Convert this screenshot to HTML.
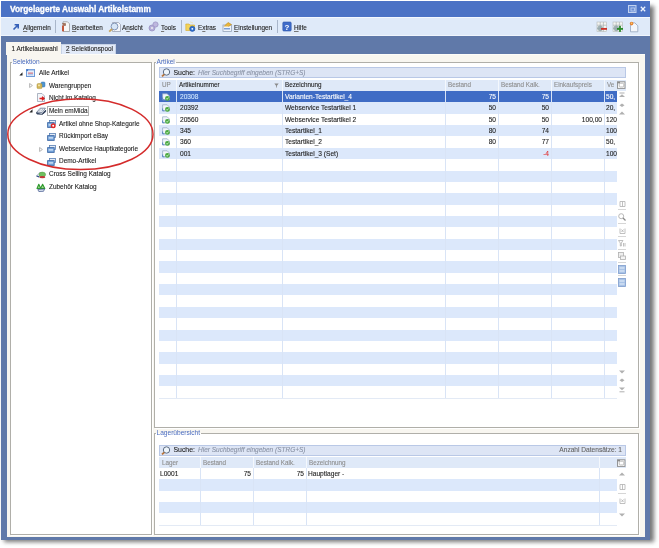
<!DOCTYPE html>
<html><head><meta charset="utf-8">
<style>
*{margin:0;padding:0;box-sizing:border-box}
html,body{width:659px;height:548px;overflow:hidden;background:#fff;font-family:"Liberation Sans",sans-serif}
.a{position:absolute}
svg.a{overflow:visible}
.t{position:absolute;white-space:nowrap;font-size:6.6px;line-height:8px;color:#222;-webkit-text-stroke:.1px currentColor}
.lbl{position:absolute;white-space:nowrap;font-size:6.6px;line-height:8px;color:#4a6cc0;padding:0 1px}
.g{position:absolute;white-space:nowrap;font-size:6.6px;line-height:11px;color:#222;-webkit-text-stroke:.1px currentColor}
.r{text-align:right}
u{text-decoration-color:#777;text-decoration-thickness:.6px}
</style></head><body><div style="position:absolute;left:0;top:0;width:659px;height:548px;filter:blur(0.35px)">

<div class="a" style="left:4px;top:5.5px;width:650px;height:536px;background:#555;filter:blur(2.2px);opacity:.8"></div>
<div class="a" style="left:1px;top:1px;width:649px;height:539px;background:#6079a9"></div>
<div class="a" style="left:1px;top:1px;width:649px;height:16px;background:#4b72c5"></div>
<div class="t" style="left:10px;top:4px;font-size:8.3px;line-height:10px;font-weight:bold;color:#fff;-webkit-text-stroke:.3px #fff">Vorgelagerte Auswahl Artikelstamm</div>
<svg class="a" style="left:628px;top:5px;" width="9" height="8" viewBox="0 0 9 8"><rect x="0.5" y="0.5" width="7.5" height="7" fill="#6b8fd6" stroke="#c2d2f0" stroke-width="1"/><rect x="3" y="3" width="3.5" height="3" fill="none" stroke="#c2d2f0" stroke-width=".8"/></svg>
<svg class="a" style="left:640.3px;top:5.5px;" width="6" height="6" viewBox="0 0 6 6"><path d="M.8 .8L5.2 5.2M5.2 .8L.8 5.2" stroke="#eef3fc" stroke-width="1.3"/></svg>
<div class="a" style="left:1px;top:17px;width:649px;height:19px;background:#dfeaf9;border-top:1px solid #f4f8fe;border-bottom:1px solid #f0f5fc"></div>
<div class="a" style="left:7px;top:54px;width:638px;height:483px;background:#f8f6f0;border-top:1px solid #fdfcf8"></div>
<div class="a" style="left:6px;top:42px;width:55px;height:13px;background:#f8f6f0"></div>
<div class="t" style="left:11.5px;top:45px;font-size:6.4px">1 Artikelauswahl</div>
<div class="a" style="left:61px;top:43.5px;width:55px;height:10.5px;background:#e2eaf8;border:1px solid #c6d2e6;border-bottom:none"></div>
<div class="t" style="left:66px;top:45px;font-size:6.4px"><u>2</u> Selektionspool</div>
<div class="t" style="left:23px;top:23.8px;font-size:6.35px"><u>A</u>llgemein</div>
<div class="a" style="left:55px;top:20px;width:1px;height:13px;background:#a9b6ca"></div>
<div class="t" style="left:72px;top:23.8px;font-size:6.35px"><u>B</u>earbeiten</div>
<div class="t" style="left:122px;top:23.8px;font-size:6.35px">A<u>n</u>sicht</div>
<div class="t" style="left:161px;top:23.8px;font-size:6.35px"><u>T</u>ools</div>
<div class="a" style="left:181px;top:20px;width:1px;height:13px;background:#a9b6ca"></div>
<div class="t" style="left:198px;top:23.8px;font-size:6.35px">E<u>x</u>tras</div>
<div class="t" style="left:234px;top:23.8px;font-size:6.35px"><u>E</u>instellungen</div>
<div class="a" style="left:277px;top:20px;width:1px;height:13px;background:#a9b6ca"></div>
<div class="t" style="left:294px;top:23.8px;font-size:6.35px"><u>H</u>ilfe</div>
<div class="a" style="left:10px;top:62px;width:142px;height:473px;border:1px solid #b0afa9;box-shadow:1px 1px 0 #fff, inset 1px 1px 0 #fff;background:#fff"></div>
<div class="a" style="left:12px;top:59px;width:28px;height:5px;background:linear-gradient(#f8f6f0 0 3px,#fff 3px)"></div>
<div class="lbl" style="left:11.5px;top:58px;">Selektion</div>
<div class="a" style="left:154px;top:62px;width:485px;height:366px;border:1px solid #b0afa9;box-shadow:1px 1px 0 #fff, inset 1px 1px 0 #fff;background:#fff"></div>
<div class="a" style="left:156px;top:59px;width:20px;height:5px;background:linear-gradient(#f8f6f0 0 3px,#fff 3px)"></div>
<div class="lbl" style="left:155.5px;top:58px;">Artikel</div>
<div class="a" style="left:154px;top:433px;width:485px;height:102px;border:1px solid #b0afa9;box-shadow:1px 1px 0 #fff, inset 1px 1px 0 #fff;background:#fff"></div>
<div class="a" style="left:156px;top:430px;width:45px;height:5px;background:linear-gradient(#f8f6f0 0 3px,#fff 3px)"></div>
<div class="lbl" style="left:155.5px;top:429px;">Lagerübersicht</div>
<div class="t" style="left:39px;top:69.2px;font-size:6.45px">Alle Artikel</div>
<div class="t" style="left:49px;top:81.8px;font-size:6.45px">Warengruppen</div>
<div class="t" style="left:49px;top:94.4px;font-size:6.45px">Nicht im Katalog</div>
<div class="t" style="left:49px;top:107.0px;font-size:6.45px">Mein emMida</div>
<div class="t" style="left:59px;top:119.6px;font-size:6.45px">Artikel ohne Shop-Kategorie</div>
<div class="t" style="left:59px;top:132.2px;font-size:6.45px">Rückimport eBay</div>
<div class="t" style="left:59px;top:144.8px;font-size:6.45px">Webservice Hauptkategorie</div>
<div class="t" style="left:59px;top:157.4px;font-size:6.45px">Demo-Artikel</div>
<div class="t" style="left:49px;top:170.0px;font-size:6.45px">Cross Selling Katalog</div>
<div class="t" style="left:49px;top:182.6px;font-size:6.45px">Zubehör Katalog</div>
<div class="a" style="left:159px;top:67px;width:467px;height:11px;background:#dde5f5;border:1px solid #b9c8e6"></div>
<div class="t" style="left:173.5px;top:68.5px;font-size:6.9px;color:#1e1e1e">Suche:</div>
<div class="t" style="left:198px;top:68.5px;font-style:italic;color:#8a93a6;font-size:6.5px">Hier Suchbegriff eingeben (STRG+S)</div>
<div class="a" style="left:159px;top:80px;width:467px;height:10.5px;background:#dfe9f8"></div>
<div class="a" style="left:159px;top:91.0px;width:458px;height:11.36px;background:#3f6cc5"></div>
<div class="a" style="left:159px;top:102.36px;width:458px;height:11.36px;background:#dce8fb"></div>
<div class="a" style="left:159px;top:125.08px;width:458px;height:11.36px;background:#dce8fb"></div>
<div class="a" style="left:159px;top:147.8px;width:458px;height:11.36px;background:#dce8fb"></div>
<div class="a" style="left:159px;top:170.52px;width:458px;height:11.36px;background:#dce8fb"></div>
<div class="a" style="left:159px;top:193.24px;width:458px;height:11.36px;background:#dce8fb"></div>
<div class="a" style="left:159px;top:215.96px;width:458px;height:11.36px;background:#dce8fb"></div>
<div class="a" style="left:159px;top:238.68px;width:458px;height:11.36px;background:#dce8fb"></div>
<div class="a" style="left:159px;top:261.4px;width:458px;height:11.36px;background:#dce8fb"></div>
<div class="a" style="left:159px;top:284.12px;width:458px;height:11.36px;background:#dce8fb"></div>
<div class="a" style="left:159px;top:306.84px;width:458px;height:11.36px;background:#dce8fb"></div>
<div class="a" style="left:159px;top:329.56px;width:458px;height:11.36px;background:#dce8fb"></div>
<div class="a" style="left:159px;top:352.28px;width:458px;height:11.36px;background:#dce8fb"></div>
<div class="a" style="left:159px;top:375.0px;width:458px;height:11.36px;background:#dce8fb"></div>
<div class="a" style="left:176px;top:91px;width:1px;height:306.72px;background:#d9e4f6"></div>
<div class="a" style="left:176px;top:80px;width:1px;height:11px;background:#f4f8fd"></div>
<div class="a" style="left:282px;top:91px;width:1px;height:306.72px;background:#d9e4f6"></div>
<div class="a" style="left:282px;top:80px;width:1px;height:11px;background:#f4f8fd"></div>
<div class="a" style="left:445px;top:91px;width:1px;height:306.72px;background:#d9e4f6"></div>
<div class="a" style="left:445px;top:80px;width:1px;height:11px;background:#f4f8fd"></div>
<div class="a" style="left:498px;top:91px;width:1px;height:306.72px;background:#d9e4f6"></div>
<div class="a" style="left:498px;top:80px;width:1px;height:11px;background:#f4f8fd"></div>
<div class="a" style="left:551px;top:91px;width:1px;height:306.72px;background:#d9e4f6"></div>
<div class="a" style="left:551px;top:80px;width:1px;height:11px;background:#f4f8fd"></div>
<div class="a" style="left:604px;top:91px;width:1px;height:306.72px;background:#d9e4f6"></div>
<div class="a" style="left:604px;top:80px;width:1px;height:11px;background:#f4f8fd"></div>
<div class="a" style="left:159px;top:397.72px;width:458px;height:1px;background:#e3eaf5"></div>
<div class="g" style="left:162px;top:79px;font-size:6.3px;color:#8d8d8d">UP</div>
<div class="g" style="left:179px;top:79px;font-size:6.3px;color:#222">Artikelnummer</div>
<div class="g" style="left:285px;top:79px;font-size:6.3px;color:#222">Bezeichnung</div>
<div class="g" style="left:448px;top:79px;font-size:6.3px;color:#8d8d8d">Bestand</div>
<div class="g" style="left:501px;top:79px;font-size:6.3px;color:#8d8d8d">Bestand Kalk.</div>
<div class="g" style="left:554px;top:79px;font-size:6.3px;color:#8d8d8d">Einkaufspreis</div>
<div class="g" style="left:607px;top:79px;font-size:6.3px;color:#8d8d8d">Ve</div>
<div class="g" style="left:180px;top:91.0px;color:#cfe6ff">20308</div>
<div class="g" style="left:285px;top:91.0px;color:#fff">Varianten-Testartikel_4</div>
<div class="g r" style="left:447px;top:91.0px;color:#fff;width:49px">75</div>
<div class="g r" style="left:500px;top:91.0px;color:#fff;width:49px">75</div>
<div class="g r" style="left:553px;top:91.0px;color:#fff;width:49px"></div>
<div class="g" style="left:606px;top:91.0px;color:#fff">50,</div>
<div class="g" style="left:180px;top:102.36px;color:#222">20392</div>
<div class="g" style="left:285px;top:102.36px;color:#222">Webservice Testartikel 1</div>
<div class="g r" style="left:447px;top:102.36px;color:#222;width:49px">50</div>
<div class="g r" style="left:500px;top:102.36px;color:#222;width:49px">50</div>
<div class="g r" style="left:553px;top:102.36px;color:#222;width:49px"></div>
<div class="g" style="left:606px;top:102.36px;color:#222">20,</div>
<div class="g" style="left:180px;top:113.72px;color:#222">20560</div>
<div class="g" style="left:285px;top:113.72px;color:#222">Webservice Testartikel 2</div>
<div class="g r" style="left:447px;top:113.72px;color:#222;width:49px">50</div>
<div class="g r" style="left:500px;top:113.72px;color:#222;width:49px">50</div>
<div class="g r" style="left:553px;top:113.72px;color:#222;width:49px">100,00</div>
<div class="g" style="left:606px;top:113.72px;color:#222">120</div>
<div class="g" style="left:180px;top:125.08px;color:#222">345</div>
<div class="g" style="left:285px;top:125.08px;color:#222">Testartikel_1</div>
<div class="g r" style="left:447px;top:125.08px;color:#222;width:49px">80</div>
<div class="g r" style="left:500px;top:125.08px;color:#222;width:49px">74</div>
<div class="g r" style="left:553px;top:125.08px;color:#222;width:49px"></div>
<div class="g" style="left:606px;top:125.08px;color:#222">100</div>
<div class="g" style="left:180px;top:136.44px;color:#222">360</div>
<div class="g" style="left:285px;top:136.44px;color:#222">Testartikel_2</div>
<div class="g r" style="left:447px;top:136.44px;color:#222;width:49px">80</div>
<div class="g r" style="left:500px;top:136.44px;color:#222;width:49px">77</div>
<div class="g r" style="left:553px;top:136.44px;color:#222;width:49px"></div>
<div class="g" style="left:606px;top:136.44px;color:#222">50,</div>
<div class="g" style="left:180px;top:147.8px;color:#222">001</div>
<div class="g" style="left:285px;top:147.8px;color:#222">Testartikel_3 (Set)</div>
<div class="g r" style="left:447px;top:147.8px;color:#222;width:49px"></div>
<div class="g r" style="left:500px;top:147.8px;color:#e03030;width:49px">-4</div>
<div class="g r" style="left:553px;top:147.8px;color:#222;width:49px"></div>
<div class="g" style="left:606px;top:147.8px;color:#222">100</div>
<div class="a" style="left:159px;top:445px;width:467px;height:10.5px;background:#dde5f5;border:1px solid #b9c8e6"></div>
<div class="t" style="left:173.5px;top:446px;font-size:6.9px;color:#1e1e1e">Suche:</div>
<div class="t" style="left:198px;top:446px;font-style:italic;color:#8a93a6;font-size:6.5px">Hier Suchbegriff eingeben (STRG+S)</div>
<div class="g r" style="left:540px;top:444.3px;color:#666;width:82px">Anzahl Datensätze: 1</div>
<div class="a" style="left:159px;top:457px;width:467px;height:11px;background:#dfe9f8"></div>
<div class="a" style="left:159px;top:479.36px;width:458px;height:11.36px;background:#dce8fb"></div>
<div class="a" style="left:159px;top:502.08px;width:458px;height:11.36px;background:#dce8fb"></div>
<div class="a" style="left:200px;top:468px;width:1px;height:56.8px;background:#d9e4f6"></div>
<div class="a" style="left:200px;top:457px;width:1px;height:11px;background:#f4f8fd"></div>
<div class="a" style="left:253px;top:468px;width:1px;height:56.8px;background:#d9e4f6"></div>
<div class="a" style="left:253px;top:457px;width:1px;height:11px;background:#f4f8fd"></div>
<div class="a" style="left:306px;top:468px;width:1px;height:56.8px;background:#d9e4f6"></div>
<div class="a" style="left:306px;top:457px;width:1px;height:11px;background:#f4f8fd"></div>
<div class="a" style="left:599px;top:468px;width:1px;height:56.8px;background:#d9e4f6"></div>
<div class="a" style="left:599px;top:457px;width:1px;height:11px;background:#f4f8fd"></div>
<div class="a" style="left:159px;top:524.8px;width:458px;height:1px;background:#e3eaf5"></div>
<div class="g" style="left:162px;top:457px;font-size:6.3px;color:#8d8d8d">Lager</div>
<div class="g" style="left:203px;top:457px;font-size:6.3px;color:#8d8d8d">Bestand</div>
<div class="g" style="left:256px;top:457px;font-size:6.3px;color:#8d8d8d">Bestand Kalk.</div>
<div class="g" style="left:309px;top:457px;font-size:6.3px;color:#8d8d8d">Bezeichnung</div>
<div class="g" style="left:602px;top:457px;font-size:6.3px;color:#8d8d8d"></div>
<div class="g" style="left:160px;top:468px;">L0001</div>
<div class="g r" style="left:202px;top:468px;width:49px">75</div>
<div class="g r" style="left:255px;top:468px;width:49px">75</div>
<div class="g" style="left:308px;top:468px;">Hauptlager -</div>
<svg class="a" style="left:12px;top:23px;" width="8" height="8" viewBox="0 0 8 8"><path d="M1.5 6.5L6 2M2.6 1.8H6.2V5.4" fill="none" stroke="#3560b8" stroke-width="1.6"/></svg>
<svg class="a" style="left:61px;top:21px;" width="9" height="11" viewBox="0 0 9 11"><path d="M2 .8H6.5L8.5 2.8V10.5H2Z" fill="#f7f7f7" stroke="#9a9a9a" stroke-width=".8"/><path d="M2 4.5V10.3" stroke="#c24a2a" stroke-width="1.8"/><path d="M1.2 2.5H4.5V4.5H2.5" fill="#a9735a" stroke="#7b4a35" stroke-width=".5"/></svg>
<svg class="a" style="left:108px;top:21px;" width="14" height="11" viewBox="0 0 14 11"><path d="M4.5 1.5H10.5L12.5 3.5V10.5H4.5Z" fill="#f4f6fa" stroke="#9aa2b3" stroke-width=".8"/><circle cx="6.5" cy="5.5" r="3.4" fill="#d7e6f7" stroke="#8396b8" stroke-width="1"/><path d="M4 8L1.2 10.6" stroke="#c9a45a" stroke-width="1.8"/></svg>
<svg class="a" style="left:148px;top:21px;" width="11" height="11" viewBox="0 0 11 11"><circle cx="4" cy="7" r="3" fill="#b4aed8" stroke="#9a94c4" stroke-width=".8"/><circle cx="7.5" cy="3.5" r="2.6" fill="#bdb7de" stroke="#9a94c4" stroke-width=".8"/><circle cx="4" cy="7" r="1" fill="#eee"/></svg>
<svg class="a" style="left:185px;top:21px;" width="11" height="11" viewBox="0 0 11 11"><path d="M.8 3H4L5 4H9.5V9.5H.8Z" fill="#f2d35a" stroke="#d6a928" stroke-width=".6"/><path d="M5 .8L8 2" stroke="#e9e2c0" stroke-width="1"/><circle cx="7.3" cy="7.8" r="2.6" fill="#2f6fd0" stroke="#1d4fa6" stroke-width=".6"/><circle cx="7.3" cy="7.8" r=".9" fill="#fff"/></svg>
<svg class="a" style="left:222px;top:21px;" width="11" height="11" viewBox="0 0 11 11"><rect x="1" y="4" width="8.5" height="6.5" fill="#f0f4fa" stroke="#95a3b9" stroke-width=".8"/><path d="M2 5.5L6 1.5L9.5 3.5L6.5 5.5" fill="#e9b53a" stroke="#b9861b" stroke-width=".6"/><rect x="2" y="7" width="6" height="1.5" fill="#7aa0d8"/></svg>
<svg class="a" style="left:282px;top:21px;" width="10" height="11" viewBox="0 0 10 11"><rect x=".8" y="1" width="8.4" height="9" rx="1" fill="#3e6bc9" stroke="#2d55a8" stroke-width=".6"/><text x="5" y="8.6" font-family="Liberation Sans" font-weight="bold" font-size="8" fill="#fff" text-anchor="middle">?</text></svg>
<svg class="a" style="left:595.5px;top:21px;" width="12" height="12" viewBox="0 0 12 12"><rect x="1" y="1" width="9.5" height="9.5" fill="#f4f5f2" stroke="#b5bab8" stroke-width=".6"/><path d="M4.2 1V10.5M7.4 1V10.5M1 4.2H10.5M1 7.4H10.5" stroke="#aab2b0" stroke-width=".7"/><circle cx="4.2" cy="7.2" r="2.8" fill="#8fa3a6" opacity=".8"/><rect x="5" y="7" width="6" height="1.8" fill="#cc3026"/></svg>
<svg class="a" style="left:612px;top:21px;" width="12" height="12" viewBox="0 0 12 12"><rect x="1" y="1" width="9.5" height="9.5" fill="#f4f5f2" stroke="#b5bab8" stroke-width=".6"/><path d="M4.2 1V10.5M7.4 1V10.5M1 4.2H10.5M1 7.4H10.5" stroke="#aab2b0" stroke-width=".7"/><circle cx="4.2" cy="7.2" r="2.8" fill="#8fa3a6" opacity=".8"/><rect x="5" y="7" width="6" height="1.8" fill="#2a8a2a"/><rect x="7.1" y="4.9" width="1.8" height="6" fill="#2a8a2a"/></svg>
<svg class="a" style="left:629px;top:21px;" width="10" height="12" viewBox="0 0 10 12"><path d="M1.5 1.8H5.8L8.8 4.8V10.8H1.5Z" fill="#f3f6fb" stroke="#95a5bd" stroke-width=".8"/><circle cx="2.6" cy="2.6" r="1.8" fill="#e9822c"/><circle cx="2.6" cy="2.3" r=".7" fill="#f8d27a"/></svg>
<svg class="a" style="left:19px;top:71.5px;" width="4" height="4" viewBox="0 0 4 4"><path d="M3.5 .3V3.5H.3Z" fill="#222"/></svg>
<svg class="a" style="left:26px;top:69.3px;" width="9" height="8" viewBox="0 0 9 8"><rect x=".5" y=".5" width="8" height="7" fill="#e6eefa" stroke="#6f9ad8" stroke-width="1"/><rect x=".3" y=".3" width="2" height="1.8" fill="#3f74c8"/><rect x="2.5" y=".8" width="5.5" height="1" fill="#a9c4ea"/><rect x="2" y="3.6" width="5" height="1" fill="#c85a6a"/><rect x="2" y="5.4" width="5" height=".8" fill="#8fb0e0"/></svg>
<svg class="a" style="left:29px;top:83.3px;" width="4" height="5" viewBox="0 0 4 5"><path d="M.6 .5L3.4 2.5L.6 4.5Z" fill="none" stroke="#9a9a9a" stroke-width=".7"/></svg>
<svg class="a" style="left:36px;top:81px;" width="10" height="9" viewBox="0 0 10 9"><rect x="5" y="1" width="4" height="5" rx="1" fill="#4f95d0" stroke="#3a76b0" stroke-width=".5"/><rect x="1" y="2.6" width="5" height="5" rx="1.2" fill="#d2b75a" stroke="#a88f3a" stroke-width=".5"/><rect x="2" y="3.6" width="2" height="1.6" fill="#f2e3a8"/></svg>
<svg class="a" style="left:37px;top:93px;" width="8" height="9" viewBox="0 0 8 9"><path d="M.5 .5H5L7.5 3V8.5H.5Z" fill="#f4f6fa" stroke="#8c96aa" stroke-width=".7"/><path d="M2.5 5.5H6.5M5 3.8L7 5.5L5 7.2" stroke="#d81e1e" stroke-width="1.4" fill="none"/></svg>
<svg class="a" style="left:29px;top:109px;" width="4" height="4" viewBox="0 0 4 4"><path d="M3.5 .3V3.5H.3Z" fill="#222"/></svg>
<svg class="a" style="left:36px;top:107px;" width="10" height="8" viewBox="0 0 10 8"><path d="M.8 5.2L4.2 1.2H9.4L6.2 5.6Z" fill="#eef2f6" stroke="#51627e" stroke-width=".7"/><path d="M4.5 2.5L3 4.6M6.8 2L5.2 4.4" stroke="#8593a8" stroke-width=".6"/><path d="M.6 5.3L.9 6.9L6.2 7.2L9.6 3.2V4.8L6.2 7.4" fill="#3f4f6c" stroke="#34435e" stroke-width="1"/></svg>
<div class="a" style="left:47.3px;top:106px;width:41.5px;height:10px;border:1px solid #b0b0b0"></div>
<svg class="a" style="left:47px;top:120px;" width="9" height="8" viewBox="0 0 9 8"><rect x="2.5" y=".5" width="6" height="4" fill="#e4ecf6" stroke="#587fb5" stroke-width=".8"/><rect x=".6" y="2.6" width="6.6" height="4.9" fill="#6f9ed6" stroke="#3d68a5" stroke-width=".8"/><rect x="1.6" y="4.2" width="4.6" height="1.4" fill="#cfe1f6"/><circle cx="6.2" cy="5.8" r="2.5" fill="#e02828"/><circle cx="6.2" cy="5.8" r="1" fill="#fff"/></svg>
<svg class="a" style="left:47px;top:132.5px;" width="9" height="8" viewBox="0 0 9 8"><rect x="2.5" y=".5" width="6" height="4" fill="#e4ecf6" stroke="#587fb5" stroke-width=".8"/><rect x=".6" y="2.6" width="6.6" height="4.9" fill="#6f9ed6" stroke="#3d68a5" stroke-width=".8"/><rect x="1.6" y="4.2" width="4.6" height="1.4" fill="#cfe1f6"/></svg>
<svg class="a" style="left:39px;top:146.8px;" width="4" height="5" viewBox="0 0 4 5"><path d="M.6 .5L3.4 2.5L.6 4.5Z" fill="none" stroke="#9a9a9a" stroke-width=".7"/></svg>
<svg class="a" style="left:47px;top:145px;" width="9" height="8" viewBox="0 0 9 8"><rect x="2.5" y=".5" width="6" height="4" fill="#e4ecf6" stroke="#587fb5" stroke-width=".8"/><rect x=".6" y="2.6" width="6.6" height="4.9" fill="#6f9ed6" stroke="#3d68a5" stroke-width=".8"/><rect x="1.6" y="4.2" width="4.6" height="1.4" fill="#cfe1f6"/></svg>
<svg class="a" style="left:47px;top:157.7px;" width="9" height="8" viewBox="0 0 9 8"><rect x="2.5" y=".5" width="6" height="4" fill="#e4ecf6" stroke="#587fb5" stroke-width=".8"/><rect x=".6" y="2.6" width="6.6" height="4.9" fill="#6f9ed6" stroke="#3d68a5" stroke-width=".8"/><rect x="1.6" y="4.2" width="4.6" height="1.4" fill="#cfe1f6"/></svg>
<svg class="a" style="left:36px;top:169.5px;" width="10" height="9" viewBox="0 0 10 9"><path d="M.5 6L3.5 2.5L6 2.8L3.2 6.8Z" fill="#e8ecf2" stroke="#8a98ae" stroke-width=".5"/><path d="M.5 6L3.2 6.8" stroke="#334d8a" stroke-width="1.2"/><ellipse cx="6.3" cy="4.6" rx="3.3" ry="2.5" fill="#6fbf5e" stroke="#4c9a40" stroke-width=".5"/><ellipse cx="6.3" cy="7.2" rx="3" ry="1.1" fill="#c23838"/></svg>
<svg class="a" style="left:36px;top:182.5px;" width="10" height="9" viewBox="0 0 10 9"><path d="M1 5.5L2.8 1.2L4.6 5.2L6.6 1.2L8.8 5.5Z" fill="#9ed68a" stroke="#2f9a2f" stroke-width="1.1" stroke-linejoin="round"/><path d="M1.8 6.5L8.6 6L7.5 8.3L2.8 8.5Z" fill="#d9e2f0" stroke="#3a4f86" stroke-width=".7"/></svg>
<svg class="a" style="left:160.5px;top:68px;" width="10" height="9" viewBox="0 0 10 9"><circle cx="5.5" cy="4" r="3.2" fill="#eef5fb" stroke="#5c6c82" stroke-width="1"/><path d="M3.3 6.3L1 8.4" stroke="#b8743a" stroke-width="1.8"/></svg>
<svg class="a" style="left:160.5px;top:446px;" width="10" height="9" viewBox="0 0 10 9"><circle cx="5.5" cy="4" r="3.2" fill="#eef5fb" stroke="#5c6c82" stroke-width="1"/><path d="M3.3 6.3L1 8.4" stroke="#b8743a" stroke-width="1.8"/></svg>
<svg class="a" style="left:273.5px;top:83px;" width="5" height="5" viewBox="0 0 5 5"><path d="M.3 .5H4.7L2.9 2.8V4.6H2.1V2.8Z" fill="#8a8a8a"/></svg>
<svg class="a" style="left:617px;top:81px;" width="9" height="8" viewBox="0 0 9 8"><rect x=".5" y=".8" width="7.5" height="6.6" fill="#f6f6f6" stroke="#8c8c8c" stroke-width=".9"/><rect x="2.3" y="2.3" width="4.4" height="3.6" rx="1" fill="#fff" stroke="#9a9a9a" stroke-width=".6"/><rect x=".5" y=".8" width="2.5" height="1.6" fill="#8c8c8c"/></svg>
<svg class="a" style="left:617px;top:458.5px;" width="9" height="8" viewBox="0 0 9 8"><rect x=".5" y=".8" width="7.5" height="6.6" fill="#f6f6f6" stroke="#8c8c8c" stroke-width=".9"/><rect x="2.3" y="2.3" width="4.4" height="3.6" rx="1" fill="#fff" stroke="#9a9a9a" stroke-width=".6"/><rect x=".5" y=".8" width="2.5" height="1.6" fill="#8c8c8c"/></svg>
<svg class="a" style="left:161.5px;top:92.8px;" width="9" height="8" viewBox="0 0 9 8"><path d="M.6 .8H5.2L7.4 3V6.8H.6Z" fill="#f2f6fb" stroke="#8fa3c0" stroke-width=".7"/><path d="M.6 4.5V6.8H2.5" stroke="#5a86c4" stroke-width="1" fill="none"/><circle cx="5.4" cy="5.4" r="2.4" fill="#49a83e"/><path d="M4.2 5.4L5.1 6.3L6.6 4.5" stroke="#eaffea" stroke-width=".8" fill="none"/></svg>
<svg class="a" style="left:161.5px;top:104.16px;" width="9" height="8" viewBox="0 0 9 8"><path d="M.6 .8H5.2L7.4 3V6.8H.6Z" fill="#f2f6fb" stroke="#8fa3c0" stroke-width=".7"/><path d="M.6 4.5V6.8H2.5" stroke="#5a86c4" stroke-width="1" fill="none"/><circle cx="5.4" cy="5.4" r="2.4" fill="#49a83e"/><path d="M4.2 5.4L5.1 6.3L6.6 4.5" stroke="#eaffea" stroke-width=".8" fill="none"/></svg>
<svg class="a" style="left:161.5px;top:115.52px;" width="9" height="8" viewBox="0 0 9 8"><path d="M.6 .8H5.2L7.4 3V6.8H.6Z" fill="#f2f6fb" stroke="#8fa3c0" stroke-width=".7"/><path d="M.6 4.5V6.8H2.5" stroke="#5a86c4" stroke-width="1" fill="none"/><circle cx="5.4" cy="5.4" r="2.4" fill="#49a83e"/><path d="M4.2 5.4L5.1 6.3L6.6 4.5" stroke="#eaffea" stroke-width=".8" fill="none"/></svg>
<svg class="a" style="left:161.5px;top:126.88px;" width="9" height="8" viewBox="0 0 9 8"><path d="M.6 .8H5.2L7.4 3V6.8H.6Z" fill="#f2f6fb" stroke="#8fa3c0" stroke-width=".7"/><path d="M.6 4.5V6.8H2.5" stroke="#5a86c4" stroke-width="1" fill="none"/><circle cx="5.4" cy="5.4" r="2.4" fill="#49a83e"/><path d="M4.2 5.4L5.1 6.3L6.6 4.5" stroke="#eaffea" stroke-width=".8" fill="none"/></svg>
<svg class="a" style="left:161.5px;top:138.24px;" width="9" height="8" viewBox="0 0 9 8"><path d="M.6 .8H5.2L7.4 3V6.8H.6Z" fill="#f2f6fb" stroke="#8fa3c0" stroke-width=".7"/><path d="M.6 4.5V6.8H2.5" stroke="#5a86c4" stroke-width="1" fill="none"/><circle cx="5.4" cy="5.4" r="2.4" fill="#49a83e"/><path d="M4.2 5.4L5.1 6.3L6.6 4.5" stroke="#eaffea" stroke-width=".8" fill="none"/></svg>
<svg class="a" style="left:161.5px;top:149.60000000000002px;" width="9" height="8" viewBox="0 0 9 8"><path d="M.6 .8H5.2L7.4 3V6.8H.6Z" fill="#f2f6fb" stroke="#8fa3c0" stroke-width=".7"/><path d="M.6 4.5V6.8H2.5" stroke="#5a86c4" stroke-width="1" fill="none"/><circle cx="5.4" cy="5.4" r="2.4" fill="#49a83e"/><path d="M4.2 5.4L5.1 6.3L6.6 4.5" stroke="#eaffea" stroke-width=".8" fill="none"/></svg>
<svg class="a" style="left:618px;top:92px;" width="8" height="6" viewBox="0 0 8 6"><rect x="1.5" y=".5" width="5" height="1" fill="#b0b0b0"/><path d="M1 5H7L4 2.3Z" fill="#b0b0b0"/></svg>
<svg class="a" style="left:618px;top:102.5px;" width="8" height="5" viewBox="0 0 8 5"><path d="M4 .5L6.5 2.3L4 4.1L1.5 2.3Z" fill="#b0b0b0"/></svg>
<svg class="a" style="left:618px;top:110.7px;" width="8" height="4" viewBox="0 0 8 4"><path d="M1 3.5H7L4 .5Z" fill="#b0b0b0"/></svg>
<svg class="a" style="left:618px;top:370px;" width="8" height="4" viewBox="0 0 8 4"><path d="M1 .5H7L4 3.5Z" fill="#b0b0b0"/></svg>
<svg class="a" style="left:618px;top:378px;" width="8" height="5" viewBox="0 0 8 5"><path d="M4 .5L6.5 2.3L4 4.1L1.5 2.3Z" fill="#b0b0b0"/></svg>
<svg class="a" style="left:618px;top:386.5px;" width="8" height="6" viewBox="0 0 8 6"><path d="M1 .5H7L4 3.2Z" fill="#b0b0b0"/><rect x="1.5" y="4.3" width="5" height="1" fill="#b0b0b0"/></svg>
<svg class="a" style="left:618.5px;top:200.5px;" width="7" height="6" viewBox="0 0 7 6"><path d="M1 .5V5.5M3.5 .5V5.5M6 .5V5.5M1 .5H6M1 5.5H6" stroke="#b0b0b0" stroke-width=".8" fill="none"/></svg>
<div class="a" style="left:618px;top:209px;width:8px;height:1px;background:#d6d6d6"></div>
<svg class="a" style="left:618px;top:212.5px;" width="8" height="8" viewBox="0 0 8 8"><circle cx="3.2" cy="3.2" r="2.5" fill="none" stroke="#b0b0b0" stroke-width=".9"/><path d="M5 5L7.5 7.5" stroke="#888" stroke-width="1.2"/></svg>
<div class="a" style="left:618px;top:222.5px;width:8px;height:1px;background:#d6d6d6"></div>
<svg class="a" style="left:618.5px;top:227.5px;" width="7" height="6" viewBox="0 0 7 6"><path d="M1 .5V5.5M6 .5V5.5M1 5.5H6M2.5 1.5L4.5 4M4.5 1.5L2.5 4" stroke="#b0b0b0" stroke-width=".8" fill="none"/></svg>
<div class="a" style="left:618px;top:236px;width:8px;height:1px;background:#d6d6d6"></div>
<svg class="a" style="left:618px;top:239.5px;" width="8" height="7" viewBox="0 0 8 7"><path d="M.5 .5H5L3.3 3V6H2.3V3Z" fill="none" stroke="#b0b0b0" stroke-width=".8"/><path d="M5.5 3V6.5M7 3V6.5" stroke="#b0b0b0" stroke-width=".8"/></svg>
<div class="a" style="left:618px;top:249px;width:8px;height:1px;background:#d6d6d6"></div>
<svg class="a" style="left:618px;top:252px;" width="8" height="8" viewBox="0 0 8 8"><rect x=".5" y=".5" width="5" height="5" fill="#eee" stroke="#b0b0b0" stroke-width=".8"/><rect x="2.5" y="4" width="5" height="3.5" fill="#f4f4f4" stroke="#b0b0b0" stroke-width=".8"/></svg>
<div class="a" style="left:618px;top:262px;width:8px;height:1px;background:#d6d6d6"></div>
<svg class="a" style="left:618px;top:264.5px;" width="8" height="9" viewBox="0 0 8 9"><rect x=".5" y=".5" width="7" height="8" fill="#a9c3e6" stroke="#7d9ccc" stroke-width=".8"/><path d="M1.5 3H6.5M1.5 6H6.5" stroke="#e8f0fa" stroke-width="1"/></svg>
<div class="a" style="left:618px;top:275px;width:8px;height:1px;background:#d6d6d6"></div>
<svg class="a" style="left:618px;top:278px;" width="8" height="9" viewBox="0 0 8 9"><rect x=".5" y=".5" width="7" height="8" fill="#a9c3e6" stroke="#7d9ccc" stroke-width=".8"/><path d="M1.5 3H6.5M1.5 6H6.5" stroke="#e8f0fa" stroke-width="1"/></svg>
<svg class="a" style="left:618px;top:471.5px;" width="8" height="4" viewBox="0 0 8 4"><path d="M1 3.5H7L4 .5Z" fill="#b0b0b0"/></svg>
<svg class="a" style="left:618.5px;top:484px;" width="7" height="6" viewBox="0 0 7 6"><path d="M1 .5V5.5M3.5 .5V5.5M6 .5V5.5M1 .5H6M1 5.5H6" stroke="#b0b0b0" stroke-width=".8" fill="none"/></svg>
<div class="a" style="left:618px;top:493px;width:8px;height:1px;background:#d6d6d6"></div>
<svg class="a" style="left:618.5px;top:497.5px;" width="7" height="6" viewBox="0 0 7 6"><path d="M1 .5V5.5M6 .5V5.5M1 5.5H6M2.5 1.5L4.5 4M4.5 1.5L2.5 4" stroke="#b0b0b0" stroke-width=".8" fill="none"/></svg>
<svg class="a" style="left:618px;top:512.5px;" width="8" height="4" viewBox="0 0 8 4"><path d="M1 .5H7L4 3.5Z" fill="#b0b0b0"/></svg>
<svg class="a" style="left:0px;top:0px;" width="659" height="548" viewBox="0 0 659 548"><ellipse cx="80.4" cy="134.2" rx="72.6" ry="35.4" fill="none" stroke="#d42b2b" stroke-width="1.5"/></svg>
</div></body></html>
